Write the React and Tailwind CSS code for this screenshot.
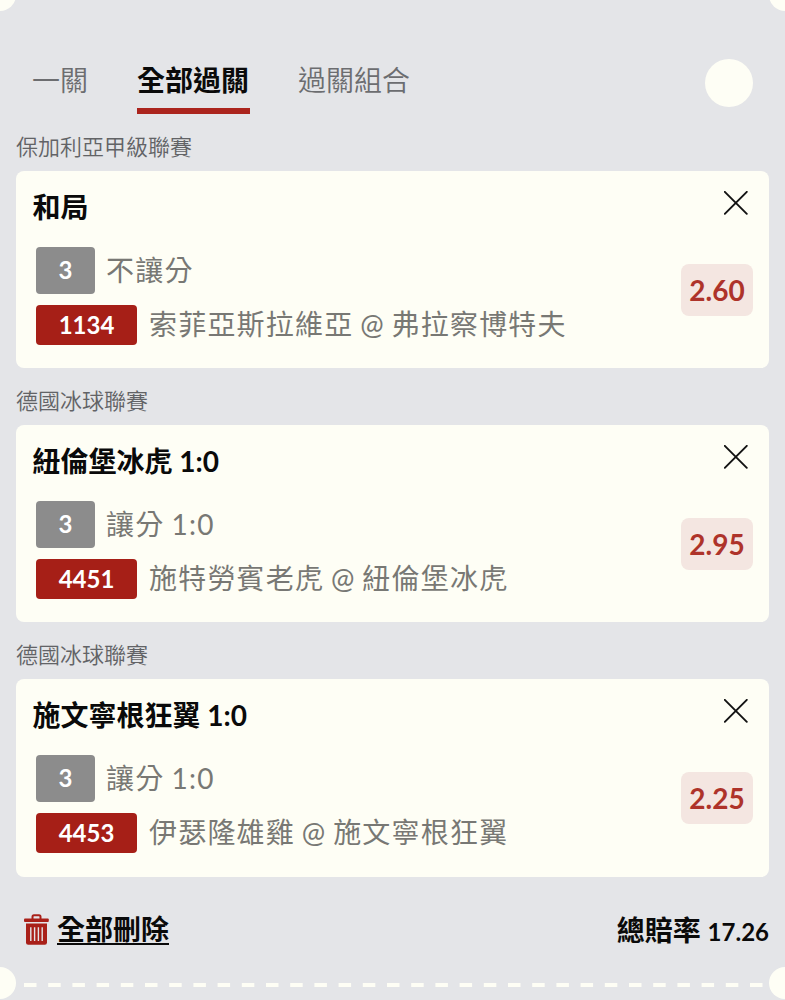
import React, { useState } from 'react';

const tabs = [
  { id: 'single', label: '一關' },
  { id: 'all', label: '全部過關' },
  { id: 'combo', label: '過關組合' },
];

const initialBets = [
  {
    id: '1134',
    league: '保加利亞甲級聯賽',
    title: '和局',
    legs: 3,
    type: '不讓分',
    match: '索菲亞斯拉維亞 @ 弗拉察博特夫',
    odds: '2.60',
  },
  {
    id: '4451',
    league: '德國冰球聯賽',
    title: '紐倫堡冰虎 1:0',
    legs: 3,
    type: '讓分 1:0',
    match: '施特勞賓老虎 @ 紐倫堡冰虎',
    odds: '2.95',
  },
  {
    id: '4453',
    league: '德國冰球聯賽',
    title: '施文寧根狂翼 1:0',
    legs: 3,
    type: '讓分 1:0',
    match: '伊瑟隆雄雞 @ 施文寧根狂翼',
    odds: '2.25',
  },
];

const CloseIcon = () => (
  <svg className="block h-6 w-6" viewBox="0 0 24 24" fill="none" stroke="#111" strokeWidth="1.9" strokeLinecap="round">
    <path d="M0.8 0.8 L22.8 22.8 M22.8 0.8 L0.8 22.8" />
  </svg>
);

const TrashIcon = () => (
  <svg className="block h-[31px] w-[25px]" viewBox="0 0 25 31" fill="none">
    <path d="M8.5 5 V2.8 Q8.5 1.3 10 1.3 H15 Q16.5 1.3 16.5 2.8 V5" stroke="#a92019" strokeWidth="2" />
    <rect x="0" y="4.6" width="24.8" height="3.4" rx="1" fill="#a92019" />
    <path d="M2 9.6 H23 V28.6 Q23 30.8 20.8 30.8 H4.2 Q2 30.8 2 28.6 Z" fill="#a92019" />
    <path d="M6.8 13.2 V27 M10.6 13.2 V27 M14.4 13.2 V27 M18.2 13.2 V27" stroke="#e4e5e8" strokeWidth="1.4" />
  </svg>
);

const BetCard = ({ bet, onRemove }) => (
  <section>
    <h2 className="h-[56.6px] pt-[17px] pl-4 text-[22px] leading-8 font-[350] text-[#626366]">{bet.league}</h2>
    <div className="mx-4 flex h-[197.6px] justify-between rounded-lg bg-[#fefef5] pr-4 pl-[16.5px]">
      <div>
        <h3 className="pt-4 text-[28px] leading-10 font-bold text-[#0a0a0a]">{bet.title}</h3>
        <div className="mt-5 ml-[3.5px] flex items-center gap-3">
          <span className="flex h-[47px] w-[59px] items-center justify-center rounded bg-[#8c8c8c] text-2xl font-bold text-white">
            {bet.legs}
          </span>
          <span className="-mt-px -ml-px text-[28px] leading-10 tracking-[1.2px] text-[#787874] [word-spacing:-1.2px]">{bet.type}</span>
        </div>
        <div className="mt-[11px] ml-[3.5px] flex items-center gap-3">
          <span className="flex h-10 w-[101px] items-center justify-center rounded bg-[#a61f17] text-2xl font-bold text-white">
            {bet.id}
          </span>
          <span className="-mt-px text-[28px] leading-10 tracking-[1.2px] text-[#787874] [word-spacing:-1.6px]">{bet.match}</span>
        </div>
      </div>
      <div className="flex flex-col items-end">
        <button className="mt-5 mr-[5px]" title="刪除" onClick={() => onRemove(bet.id)}>
          <CloseIcon />
        </button>
        <span className="mt-[49px] flex h-[52px] w-[72px] items-center justify-center rounded-lg bg-[#f4e6e1] text-[28px] font-bold text-[#ae332a]">
          {bet.odds}
        </span>
      </div>
    </div>
  </section>
);

const App = () => {
  const [activeTab, setActiveTab] = useState('all');
  const [bets, setBets] = useState(initialBets);

  return (
    <div className="relative h-[1000px] w-[785px] overflow-hidden bg-[#e4e5e8] font-['Lato','Noto_Sans_CJK_TC',sans-serif]">
      {/* Ticket notches */}
      <div className="absolute -top-[21px] -left-4 size-8 rounded-full bg-[#fefef5]" />
      <div className="absolute -top-[21px] -right-4 size-8 rounded-full bg-[#fefef5]" />
      <div className="absolute top-[967px] -left-4 size-8 rounded-full bg-[#fefef5]" />
      <div className="absolute top-[967px] -right-4 size-8 rounded-full bg-[#fefef5]" />

      {/* Tabs */}
      <header className="flex h-[114px] items-end justify-between pr-8 pl-8">
        <nav className="flex gap-[48.5px]">
          {tabs.map((tab) => (
            <button
              key={tab.id}
              onClick={() => setActiveTab(tab.id)}
              className={`h-[54px] border-b-6 pb-2 text-[28px] leading-10 ${
                activeTab === tab.id ? 'border-[#ab241d] px-[0.5px] font-bold text-[#0a0a0a]' : 'border-transparent font-[350] text-[#6c6d70]'
              }`}
            >
              {tab.label}
            </button>
          ))}
        </nav>
        <div className="mb-[7px] size-12 rounded-full bg-[#fefef5]" />
      </header>

      {bets.map((bet) => (
        <BetCard key={bet.id} bet={bet} onRemove={(id) => setBets(bets.filter((b) => b.id !== id))} />
      ))}

      {/* Footer */}
      <footer className="flex h-[106.4px] items-center justify-between pr-4 pl-6">
        <button className="flex items-center gap-2" onClick={() => setBets([])}>
          <TrashIcon />
          <span className="border-b-2 border-[#0a0a0a] text-[28px] leading-[28px] font-bold text-[#0a0a0a]">全部刪除</span>
        </button>
        <p className="text-[28px] leading-10 font-bold text-[#0a0a0a]">
          總賠率 <span className="text-2xl">17.26</span>
        </p>
      </footer>
      <svg className="ml-6 block h-1 w-[740px]" viewBox="0 0 740 4">
        <path d="M0 2 H740" stroke="#fefef5" strokeWidth="4" strokeDasharray="12.5 11.7" />
      </svg>
    </div>
  );
};

export default App;
